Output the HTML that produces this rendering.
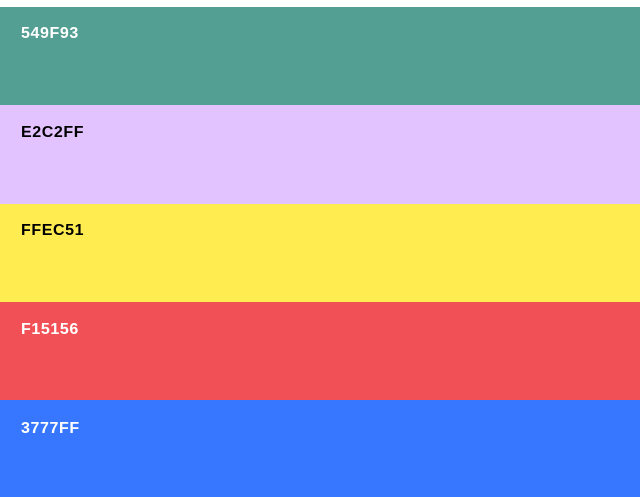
<!DOCTYPE html>
<html><head><style>
html,body{margin:0;padding:0;width:640px;height:497px;overflow:hidden;background:#fff;font-family:"Liberation Sans",sans-serif;}
.b{position:absolute;left:0;width:640px;}
.b span{position:absolute;left:21px;top:18px;font-size:16px;font-weight:bold;letter-spacing:0.6px;}
</style></head><body>
<div class="b" style="top:7px;height:98px;background:#549F93"><span style="color:#fff">549F93</span></div>
<div class="b" style="top:105px;height:99px;background:#E2C2FF"><span style="color:#000;top:19px">E2C2FF</span></div>
<div class="b" style="top:204px;height:98px;background:#FFEC51"><span style="color:#000">FFEC51</span></div>
<div class="b" style="top:302px;height:98px;background:#F15156"><span style="color:#fff;top:19px">F15156</span></div>
<div class="b" style="top:400px;height:97px;background:#3777FF"><span style="color:#fff;top:20px">3777FF</span></div>
</body></html>
